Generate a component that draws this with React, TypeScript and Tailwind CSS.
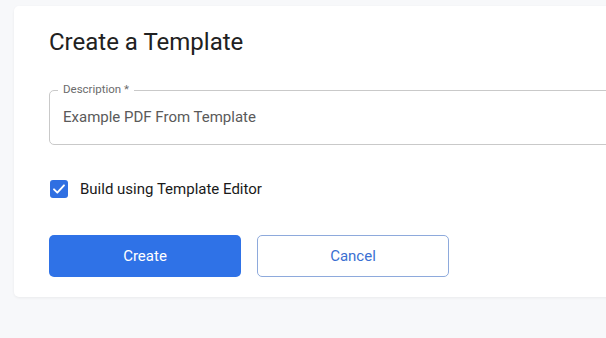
import { useState } from "react";

export default function App() {
  const [description, setDescription] = useState("Example PDF From Template");
  const [useEditor, setUseEditor] = useState(true);

  return (
    <div className="min-h-[338px] w-[606px] overflow-hidden bg-[#f7f8fa] pt-[6px] pl-[14px] font-['Roboto',sans-serif]">
      <div className="w-[640px] rounded-[5px] bg-white pt-[22px] pb-[20px] pl-[35px] shadow-[0_1px_3px_rgba(0,0,0,0.06)]">
        <h1 className="text-[24px] leading-[28px] font-normal text-[#212121]">Create a Template</h1>

        <div className="relative mt-[34px]">
          <label className="absolute -top-[8px] left-[9px] bg-white px-[5px] text-[11.5px] leading-[14px] text-[#6b6b6b]">
            Description *
          </label>
          <input
            value={description}
            onChange={(event) => setDescription(event.target.value)}
            className="h-[55px] w-full rounded-[5px] border border-[#c9c9c9] bg-white px-[13px] pb-[1px] text-[15px] leading-[24px] text-[#5a5a5a] outline-none"
          />
        </div>

        <label className="mt-[35px] flex items-center gap-[12px] pl-[1px]">
          <button
            type="button"
            onClick={() => setUseEditor((current) => !current)}
            className={`flex h-[18px] w-[18px] items-center justify-center rounded-[3px] ${
              useEditor ? "bg-[#2f6fe2]" : "border-2 border-[#757575] bg-white"
            }`}
          >
            {useEditor ? (
              <svg width="16" height="16" viewBox="0 0 24 24" fill="none">
                <path d="M4.5 12.5l5 5L19.5 6.5" stroke="white" strokeWidth="2.8" strokeLinecap="round" strokeLinejoin="round" />
              </svg>
            ) : null}
          </button>
          <span className="text-[15px] leading-[18px] font-normal text-[#1a1a1a]">Build using Template Editor</span>
        </label>

        <div className="mt-[37px] flex gap-[16px]">
          <button
            type="button"
            className="h-[42px] w-[192px] rounded-[5px] bg-[#2f72e7] text-[15px] text-white"
          >
            Create
          </button>
          <button
            type="button"
            className="h-[42px] w-[192px] rounded-[5px] border border-[#8eaadc] bg-white text-[15px] text-[#3a6fd2]"
          >
            Cancel
          </button>
        </div>
      </div>
    </div>
  );
}
